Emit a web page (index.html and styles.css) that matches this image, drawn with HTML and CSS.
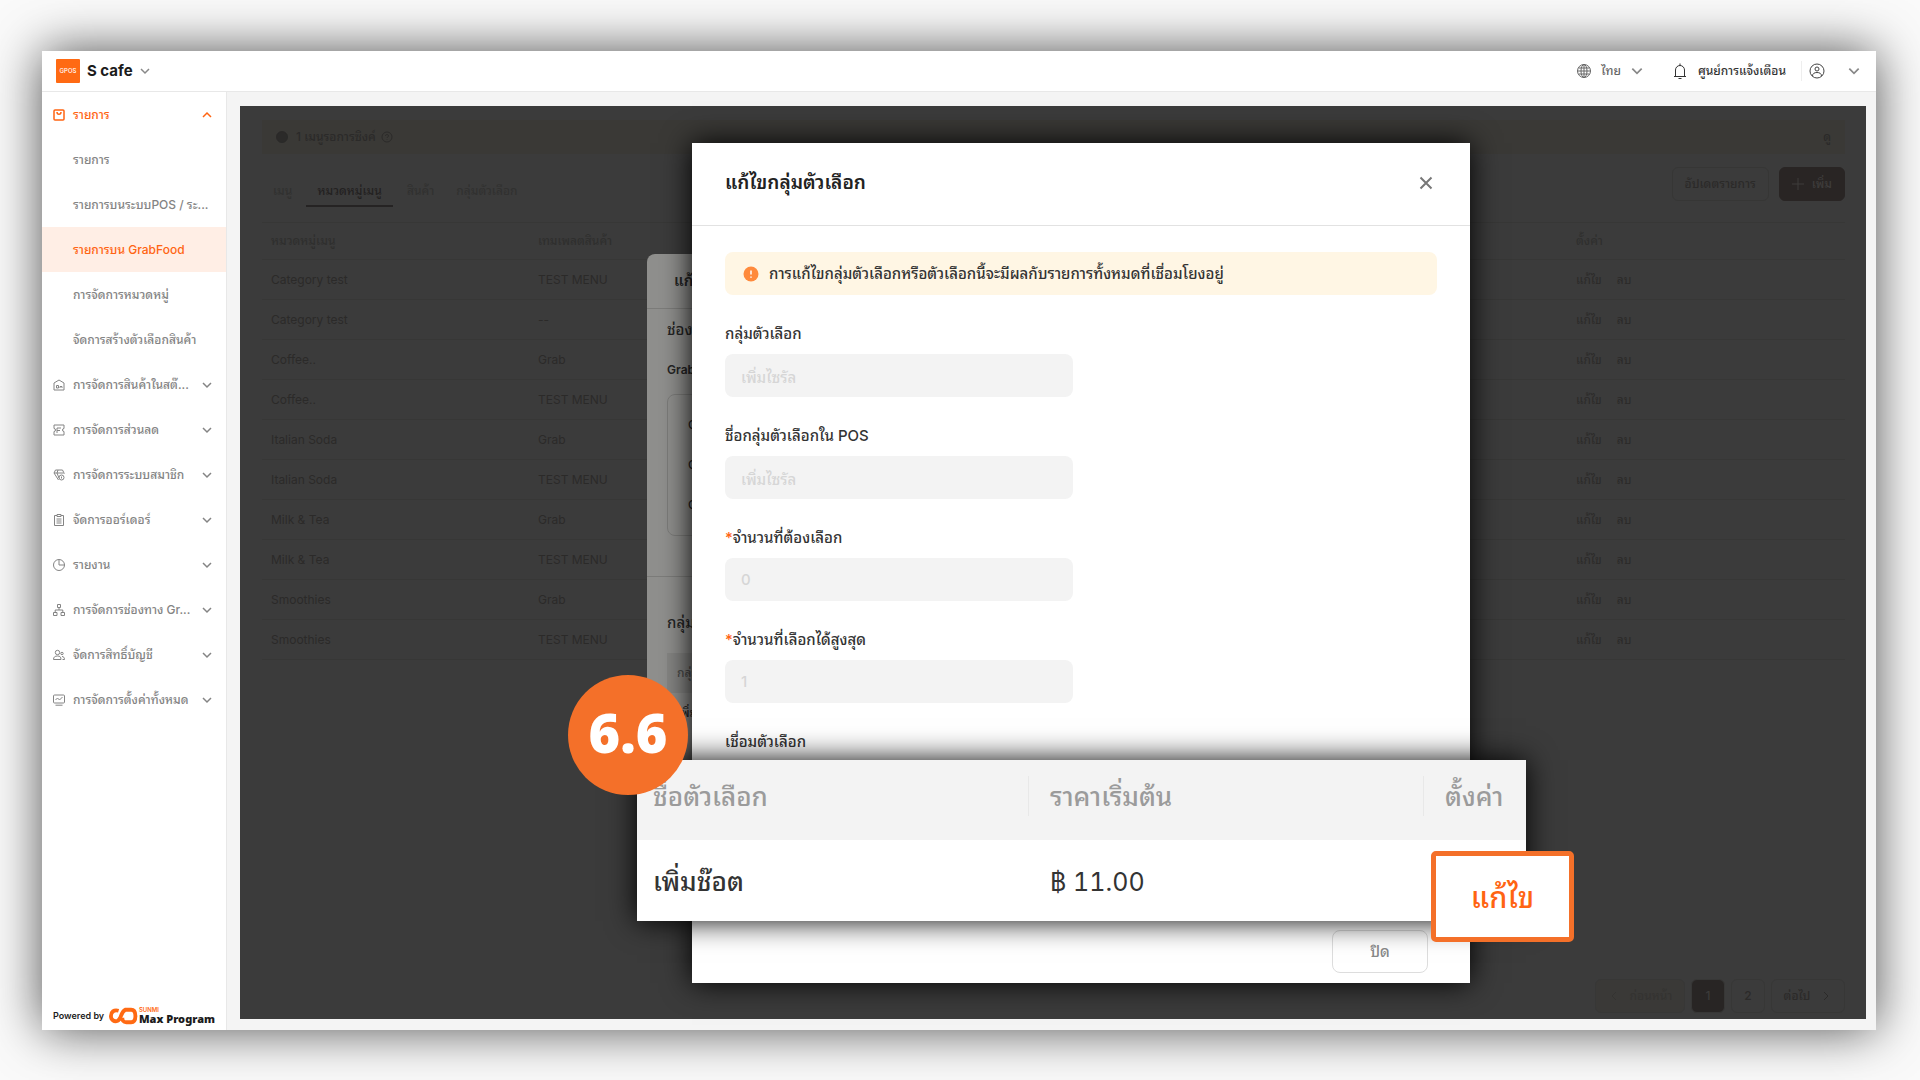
FILE: index.html
```html
<!DOCTYPE html>
<html lang="th">
<head>
<meta charset="utf-8">
<meta name="viewport" content="width=device-width, initial-scale=1">
<title>S cafe</title>
<link rel="stylesheet" href="styles.css">
</head>
<body>
<svg class="defs" aria-hidden="true">
  <symbol id="down" viewBox="0 0 12 12"><path d="M2 4l4 4 4-4"/></symbol>
  <symbol id="up" viewBox="0 0 12 12"><path d="M2 8l4-4 4 4"/></symbol>
</svg>
<div class="app">
  <header class="topbar">
    <div class="brand">
      <svg class="brand-logo" viewBox="0 0 24 24" role="img" aria-label="logo"><rect width="24" height="24" rx="1"/><text x="12" y="14">GPOS</text></svg>
      <button class="brand-name" type="button">S cafe <svg class="icon chev"><use href="#down"/></svg></button>
    </div>
    <div class="tools">
      <button class="tool lang" type="button">
        <svg class="icon" viewBox="0 0 16 16"><circle cx="8" cy="8" r="6.5"/><ellipse cx="8" cy="8" rx="3" ry="6.5"/><path d="M1.500 8h13M8 1.500v13M2.500 5h11M2.500 11h11"/></svg>
        <span>ไทย</span><svg class="icon chev"><use href="#down"/></svg>
      </button>
      <button class="tool notice" type="button">
        <svg class="icon" viewBox="0 0 16 16"><path d="M2 13.500h12M3.500 13.500V7a4.500 4.500 0 0 1 9 0v6.500M8 .5v2M6.500 15.500h3"/></svg>
        <span>ศูนย์การแจ้งเตือน</span>
      </button>
      <button class="tool account" type="button" aria-label="บัญชี">
        <svg class="icon" viewBox="0 0 16 16"><circle cx="8" cy="8" r="7"/><circle cx="8" cy="6" r="2"/><path d="M3.500 13c0-2.500 2-3.500 4.500-3.500s4.500 1 4.500 3.500"/></svg>
        <svg class="icon chev"><use href="#down"/></svg>
      </button>
    </div>
  </header>

  <div class="body">
    <nav class="sidebar">
      <ul class="menu">
        <li><a class="item open" href="#"><svg class="icon" viewBox="0 0 12 12"><rect x="1" y="1" width="10" height="10" rx="1"/><path d="M4 3c0 3 4 3 4 0"/></svg><span>รายการ</span><svg class="icon chev"><use href="#up"/></svg></a></li>
        <li><a class="item sub" href="#"><span>รายการ</span></a></li>
        <li><a class="item sub" href="#"><span>รายการบนระบบPOS / ระ...</span></a></li>
        <li><a class="item sub active" href="#"><span>รายการบน GrabFood</span></a></li>
        <li><a class="item sub" href="#"><span>การจัดการหมวดหมู่</span></a></li>
        <li><a class="item sub" href="#"><span>จัดการสร้างตัวเลือกสินค้า</span></a></li>
        <li><a class="item" href="#"><svg class="icon" viewBox="0 0 12 12"><path d="M1 11V4l5-3 5 3v7zM3.500 9V6.500h2V9zM7 9V7.500h2V9"/></svg><span>การจัดการสินค้าในสต๊...</span><svg class="icon chev"><use href="#down"/></svg></a></li>
        <li><a class="item" href="#"><svg class="icon" viewBox="0 0 12 12"><path d="M1 1h10v3.500a1.500 1.500 0 0 0 0 3V11H1V7.500a1.500 1.500 0 0 0 0-3zM4 9V4h4M4 6.500h3"/></svg><span>การจัดการส่วนลด</span><svg class="icon chev"><use href="#down"/></svg></a></li>
        <li><a class="item" href="#"><svg class="icon" viewBox="0 0 12 12"><path d="M5.500 11L1 4l1.500-3h7L11 4v1M1 4h9M4 4l2 5M5 1L4 4"/><circle cx="8.500" cy="8.500" r="2.500"/><path d="M8.500 7.500v2"/></svg><span>การจัดการระบบสมาชิก</span><svg class="icon chev"><use href="#down"/></svg></a></li>
        <li><a class="item" href="#"><svg class="icon" viewBox="0 0 12 12"><path d="M4 1.500H1.500V11.500h9V1.500H8M4 .5h4v2H4zM3.500 5h5M3.500 7h5M3.500 9h5"/></svg><span>จัดการออร์เดอร์</span><svg class="icon chev"><use href="#down"/></svg></a></li>
        <li><a class="item" href="#"><svg class="icon" viewBox="0 0 12 12"><circle cx="6" cy="6" r="5.500"/><path d="M6 .5V6h5.500"/></svg><span>รายงาน</span><svg class="icon chev"><use href="#down"/></svg></a></li>
        <li><a class="item" href="#"><svg class="icon" viewBox="0 0 12 12"><path d="M4.500.5h3v3h-3zM.5 8.500h3.500v3H.5zM8 8.500h3.500v3H8zM6 3.500V6M2.200 8.500V6h7.600v2.500"/></svg><span>การจัดการช่องทาง Gr...</span><svg class="icon chev"><use href="#down"/></svg></a></li>
        <li><a class="item" href="#"><svg class="icon" viewBox="0 0 12 12"><circle cx="4.500" cy="3.500" r="2.200"/><path d="M.5 10.500C.5 8 2 7 4.500 7s3.500 1 3.500 3.500zM9.500 10.500h2C11.500 8.500 10.500 7.500 9 7.500"/><circle cx="9" cy="4.500" r="1.200"/></svg><span>จัดการสิทธิ์บัญชี</span><svg class="icon chev"><use href="#down"/></svg></a></li>
        <li><a class="item" href="#"><svg class="icon" viewBox="0 0 12 12"><rect x=".5" y="1" width="11" height="8" rx="1"/><path d="M2.500 6l2-2 2 2 3-3M2.500 11.200h7"/></svg><span>การจัดการตั้งค่าทั้งหมด</span><svg class="icon chev"><use href="#down"/></svg></a></li>
      </ul>
      <div class="powered">
        <span>Powered by</span>
        <svg class="powered-logo" viewBox="0 0 30 18" aria-hidden="true"><path d="M10 3.500C5 2 2 5 2 9s3.500 6.500 7 5C13 12 12 5 17 2.500h6c3 0 4.500 2 4.500 6.500s-1.500 6.500-4.500 6.500h-5c-3 0-4.500-2-4-5"/></svg>
        <span class="powered-name"><small>SUNMI</small><b>Max Program</b></span>
      </div>
    </nav>

    <main class="content">
      <section class="panel">
        <div class="sync">
          <svg class="icon solid" viewBox="0 0 12 12"><circle cx="6" cy="6" r="5.500"/></svg>
          <span>1 เมนูรอการซิงค์</span>
          <svg class="icon" viewBox="0 0 12 12"><circle cx="6" cy="6" r="5"/><path d="M4.500 5c0-2 3-2 3 0 0 1-1.500 1-1.500 2M6 8.500v.5"/></svg>
          <a class="view" href="#">ดู</a>
        </div>
        <div class="toolbar">
          <div class="tabs">
            <a href="#">เมนู</a><a class="on" href="#">หมวดหมู่เมนู</a><a href="#">สินค้า</a><a href="#">กลุ่มตัวเลือก</a>
          </div>
          <div class="actions">
            <button class="ghost" type="button">อัปเดตรายการ</button>
            <button class="add" type="button"><svg class="icon" viewBox="0 0 12 12"><path d="M6 0v12M0 6h12"/></svg>เพิ่ม</button>
          </div>
        </div>
        <table class="list">
          <colgroup><col class="c-name"><col><col class="c-set"></colgroup>
          <thead><tr><th>หมวดหมู่เมนู</th><th>เทมเพลตสินค้า</th><th>ตั้งค่า</th></tr></thead>
          <tbody>
            <tr><td>Category test</td><td>TEST MENU</td><td><a href="#">แก้ไข</a><a href="#">ลบ</a></td></tr>
            <tr><td>Category test</td><td>--</td><td><a href="#">แก้ไข</a><a href="#">ลบ</a></td></tr>
            <tr><td>Coffee..</td><td>Grab</td><td><a href="#">แก้ไข</a><a href="#">ลบ</a></td></tr>
            <tr><td>Coffee..</td><td>TEST MENU</td><td><a href="#">แก้ไข</a><a href="#">ลบ</a></td></tr>
            <tr><td>Italian Soda</td><td>Grab</td><td><a href="#">แก้ไข</a><a href="#">ลบ</a></td></tr>
            <tr><td>Italian Soda</td><td>TEST MENU</td><td><a href="#">แก้ไข</a><a href="#">ลบ</a></td></tr>
            <tr><td>Milk &amp; Tea</td><td>Grab</td><td><a href="#">แก้ไข</a><a href="#">ลบ</a></td></tr>
            <tr><td>Milk &amp; Tea</td><td>TEST MENU</td><td><a href="#">แก้ไข</a><a href="#">ลบ</a></td></tr>
            <tr><td>Smoothies</td><td>Grab</td><td><a href="#">แก้ไข</a><a href="#">ลบ</a></td></tr>
            <tr><td>Smoothies</td><td>TEST MENU</td><td><a href="#">แก้ไข</a><a href="#">ลบ</a></td></tr>
          </tbody>
        </table>
        <div class="pager">
          <button class="prev" type="button"><svg class="icon" viewBox="0 0 12 12"><path d="M8 2L4 6l4 4"/></svg>ก่อนหน้า</button>
          <button class="page on" type="button">1</button>
          <button class="page" type="button">2</button>
          <button class="next" type="button">ต่อไป<svg class="icon" viewBox="0 0 12 12"><path d="M4 2l4 4-4 4"/></svg></button>
        </div>
      </section>
    </main>
  </div>

  <section class="under">
    <h2>แก้ไข</h2>
    <div class="under-body">
      <h3>ช่องทาง</h3>
      <h4>Grab</h4>
      <ul><li>Grab</li><li>Grab</li><li>Grab</li></ul>
    </div>
    <div class="under-body groups">
      <h3>กลุ่ม</h3>
      <p class="under-head">กลุ่ม</p>
      <p>เพิ่ม</p>
    </div>
  </section>

  <section class="dialog" role="dialog" aria-labelledby="dialog-title">
    <header class="dialog-head">
      <h2 id="dialog-title">แก้ไขกลุ่มตัวเลือก</h2>
      <button class="close" type="button" aria-label="ปิดหน้าต่าง"><svg class="icon" viewBox="0 0 14 14"><path d="M1.500 1.500l11 11M12.500 1.500l-11 11"/></svg></button>
    </header>
    <form class="dialog-body">
      <p class="warn"><svg viewBox="0 0 16 16" aria-hidden="true"><circle cx="8" cy="8" r="7.500"/><path d="M8 4.500v4M8 10.500v1.200"/></svg>การแก้ไขกลุ่มตัวเลือกหรือตัวเลือกนี้จะมีผลกับรายการทั้งหมดที่เชื่อมโยงอยู่</p>
      <div class="field"><label for="group">กลุ่มตัวเลือก</label><input id="group" type="text" value="เพิ่มไซรัล" disabled></div>
      <div class="field"><label for="pos">ชื่อกลุ่มตัวเลือกใน POS</label><input id="pos" type="text" value="เพิ่มไซรัล" disabled></div>
      <div class="field"><label for="min"><i>*</i>จำนวนที่ต้องเลือก</label><input id="min" type="text" value="0" disabled></div>
      <div class="field"><label for="max"><i>*</i>จำนวนที่เลือกได้สูงสุด</label><input id="max" type="text" value="1" disabled></div>
      <h3 class="linked">เชื่อมตัวเลือก</h3>
    </form>
    <footer class="dialog-foot"><button class="dismiss" type="button">ปิด</button></footer>

    <table class="options">
      <colgroup><col class="o-name"><col><col class="o-set"></colgroup>
      <thead><tr><th>ชื่อตัวเลือก</th><th>ราคาเริ่มต้น</th><th>ตั้งค่า</th></tr></thead>
      <tbody><tr><td>เพิ่มช๊อต</td><td class="price">฿ 11.00</td><td></td></tr></tbody>
    </table>
    <button class="edit" type="button">แก้ไข</button>
    <span class="step">6.6</span>
  </section>
</div>
</body>
</html>
```
FILE: styles.css
```css
* { box-sizing: border-box; }
body {
  margin: 0;
  min-height: 100vh;
  padding: 51px 44px 50px 42px;
  display: flex;
  background: #fafafa;
  color: #333;
  font: 500 12px/20px Inter, "Noto Sans Thai Looped", Loma, Garuda, Umpush, Waree, "Noto Sans Thai", "Noto Sans", sans-serif;
}
h2, h3, h4, p, ul { margin: 0; padding: 0; font-weight: 500; }
ul { list-style: none; }
a { color: inherit; text-decoration: none; }
button, input { font: inherit; color: inherit; margin: 0; }
button { padding: 0; border: 0; background: none; white-space: nowrap; }
.defs { position: absolute; width: 0; height: 0; }
.icon { width: 12px; height: 12px; flex: none; fill: none; stroke: currentColor; stroke-width: 1; }
.chev { stroke-width: 1.500; }

.app {
  position: relative;
  flex: 1;
  min-width: 0;
  display: flex;
  flex-direction: column;
  background: #f4f4f4;
  box-shadow: 0 0 48px rgba(0, 0, 0, .68);
}
.topbar {
  height: 41px;
  padding: 0 15px 0 14px;
  display: flex;
  align-items: center;
  justify-content: space-between;
  background: #fff;
  border-bottom: 1px solid #e8e8e8;
}
.brand, .brand-name, .tools, .tool { display: flex; align-items: center; }
.brand { gap: 7px; }
.brand-logo { width: 24px; height: 24px; }
.brand-logo rect { fill: #ff6a13; }
.brand-logo text { fill: #fff; font-size: 6px; text-anchor: middle; }
.brand-name { gap: 6px; font-size: 15px; font-weight: 700; color: #1c1c1c; }
.brand-name .chev, .tool .chev { color: #888; stroke-width: 1.500; }
.tool { color: #444; }
.tool .icon { width: 16px; height: 16px; }
.tool .chev { width: 14px; height: 14px; }
.lang { gap: 9px; color: #666; }
.notice { gap: 10px; margin-left: 28px; padding-right: 15px; border-right: 1px solid #eee; color: #333; }
.account { gap: 22px; margin-left: 7px; }

.body { flex: 1; display: flex; }
.sidebar {
  width: 185px;
  flex: none;
  display: flex;
  flex-direction: column;
  justify-content: space-between;
  background: #fff;
  border-right: 1px solid #e8e8e8;
}
.item {
  height: 45px;
  padding: 0 13px 0 11px;
  display: flex;
  align-items: center;
  gap: 8px;
  color: #848484;
}
.item span { flex: 1; min-width: 0; white-space: nowrap; }
.item.sub { padding: 0 16px 0 31px; }
.item.open, .item.active { color: #ff6412; }
.open .icon { stroke-width: 1.500; }
.active { background: #ffeee5; }
.powered { padding: 0 11px 5px; display: flex; align-items: center; gap: 5px; color: #1c1c1c; font-size: 9px; font-weight: 600; line-height: 12px; white-space: nowrap; }
.powered-logo { width: 30px; height: 18px; fill: none; stroke: #ff6a13; stroke-width: 4; }
.powered-name { display: flex; flex-direction: column; margin-left: -4px; line-height: 9px; }
.powered-name small { font-size: 6px; line-height: 6px; color: #ff6a13; }
.powered-name b { font-family: "Noto Sans", sans-serif; font-size: 11px; line-height: 12px; }

.content { flex: 1; min-width: 0; display: flex; padding: 14px 10px 11px 13px; }
.panel {
  flex: 1;
  min-width: 0;
  display: flex;
  flex-direction: column;
  padding: 14px 21px 6px 22px;
  background: #3b3b3b;
  color: #2b2a29;
}
.sync { height: 34px; padding: 0 14px; display: flex; align-items: center; gap: 5px; background: #3a3936; }
.sync .solid { fill: currentColor; margin-right: 3px; }
.view { margin-left: auto; }
.toolbar { height: 68px; padding: 13px 0 15px; display: flex; align-items: flex-start; justify-content: space-between; }
.tabs { display: flex; align-self: flex-end; }
.tabs a { padding: 10px 11px 4px; border-bottom: 2px solid transparent; color: #313130; white-space: nowrap; }
.tabs .on { border-color: #252323; color: #232121; margin: 0 3px; }
.actions { display: flex; gap: 10px; }
.actions button { height: 34px; padding: 0 12px; border: 1px solid #363635; border-radius: 6px; }
.actions .add { display: flex; align-items: center; gap: 8px; background: #292524; border-color: #292524; color: #3e3c3b; }
.list { width: 100%; table-layout: fixed; border-collapse: collapse; text-align: left; font-weight: 400; }
.c-name { width: 267px; }
.c-set { width: 278px; }
.list th { height: 37px; padding: 0 9px; border-top: 1px solid #373736; border-bottom: 1px solid #373736; font-weight: 500; color: #2f2f2e; }
.list td { height: 40px; padding: 0 9px; border-bottom: 1px solid #373736; }
.list td a + a { margin-left: 15px; }
.pager { margin-top: auto; display: flex; justify-content: flex-end; gap: 6px; }
.pager button { height: 34px; border: 1px solid #373736; border-radius: 6px; display: flex; align-items: center; justify-content: center; gap: 10px; }
.pager .page { width: 34px; }
.pager .on { background: #282524; color: #3c3b3a; }
.pager .prev { width: 90px; color: #343331; background: #3a3937; }
.pager .next { width: 74px; }

.under {
  position: absolute;
  top: 203px;
  left: 605px;
  width: 780px;
  padding-bottom: 40px;
  border-radius: 8px 8px 0 0;
  background: #8f8f8d;
  color: #242424;
}
.under h2 { padding: 17px 27px; border-bottom: 1px solid #7c7c7a; font-size: 15px; font-weight: 600; }
.under-body { padding: 11px 20px 40px; border-bottom: 1px solid #7c7c7a; }
.under h3 { font-size: 15px; }
.under h4 { margin: 20px 0 14px; font-size: 12px; font-weight: 600; }
.under ul { height: 142px; padding: 10px 20px; border: 1px solid #7c7c7a; border-radius: 8px; }
.under li { line-height: 40px; }
.under .groups { padding-top: 36px; }
.under p { padding: 10px; line-height: 20px; }
.under .under-head { margin-top: 20px; background: #858583; color: #4a4a49; }

.dialog {
  position: absolute;
  top: 92px;
  left: 650px;
  width: 778px;
  background: #fff;
  box-shadow: 0 0 28px #000;
}
.dialog-head { height: 83px; padding: 0 37px 2px 33px; display: flex; align-items: center; justify-content: space-between; border-bottom: 1px solid #e2e2e2; }
.dialog-head h2 { font-size: 19px; font-weight: 600; color: #222; }
.close { width: 14px; height: 14px; color: #777; }
.close .icon { width: 14px; height: 14px; display: block; stroke-width: 2; }
.dialog-body { padding: 26px 33px 159px; }
.warn { height: 43px; padding: 0 18px; display: flex; align-items: center; gap: 10px; border-radius: 8px; background: #fff6e4; font-size: 15px; white-space: nowrap; }
.warn svg { width: 16px; height: 16px; flex: none; fill: #ff8a3c; }
.warn path { stroke: #fff; stroke-width: 1.500; }
.field, .linked { margin-top: 29px; font-size: 15px; line-height: 20px; }
.field label { display: block; margin-bottom: 10px; }
.field i { color: #ff6412; font-style: normal; }
.field input { display: block; width: 348px; height: 43px; padding: 0 16px; border: 0; border-radius: 8px; background: #f3f3f3; color: #d6d6d6; }
.dialog-foot { padding: 19px 42px 10px; display: flex; justify-content: flex-end; }
.dismiss { width: 96px; height: 43px; border: 1px solid #ddd; border-radius: 8px; color: #888; font-size: 15px; }

.options {
  position: absolute;
  top: 617px;
  left: -55px;
  width: 889px;
  table-layout: fixed;
  border-collapse: collapse;
  background: #fff;
  box-shadow: 0 0 28px #000;
  text-align: left;
  font-size: 26px;
  line-height: 32px;
}
.o-name { width: 391px; }
.o-set { width: 103px; }
.options th { height: 80px; padding: 0 0 6px 22px; background: #f3f3f3 linear-gradient(#e8e8e8, #e8e8e8) 0 16px / 1px 40px no-repeat; color: #9b9b9b; font-weight: 500; white-space: nowrap; }
.options th:first-child { padding-left: 16px; background-image: none; }
.options td { height: 81px; padding: 3px 0 0 22px; color: #333; }
.options td:first-child { padding-left: 16px; }
.options .price { font-weight: 400; font-size: 25px; font-variant-numeric: tabular-nums; }
.edit {
  position: absolute;
  top: 708px;
  left: 739px;
  width: 143px;
  height: 91px;
  padding-top: 3px;
  border: 5px solid #f47029;
  border-radius: 5px;
  background: #fff;
  color: #ff6412;
  font-size: 29px;
}
.step {
  position: absolute;
  top: 532px;
  left: -124px;
  width: 120px;
  height: 120px;
  border-radius: 50%;
  background: #f47029;
  color: #fff;
  font: 800 54px/114px "Open Sans", sans-serif;
  text-align: center;
}
```
